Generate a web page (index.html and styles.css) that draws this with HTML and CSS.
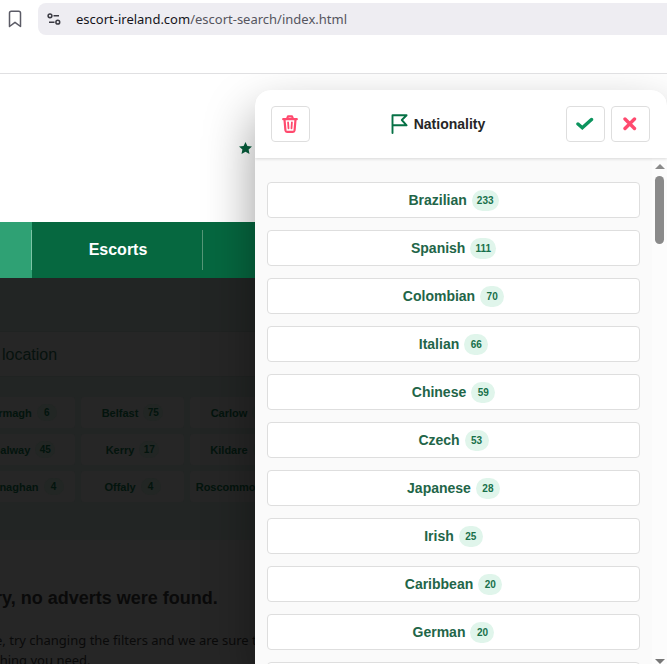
FILE: index.html
```
<!DOCTYPE html>
<html lang="en">
<head>
<meta charset="utf-8">
<title>Nationality</title>
<link rel="stylesheet" href="styles.css">
</head>
<body>
<header class="browser">
  <button class="bookmark" aria-label="Bookmark"><svg width="14" height="18" viewBox="0 0 14 18" fill="none" stroke="#5b5b66" stroke-width="1.5" stroke-linejoin="round"><path d="M1.5 3Q1.5 1.2 3.3 1.2H10.7Q12.5 1.2 12.5 3V16.5L7 12.3L1.5 16.5Z"/></svg></button>
  <div class="address">
    <svg width="14" height="14" viewBox="0 0 14 14" fill="none" stroke="#3a3a42" stroke-width="1.5"><circle cx="3" cy="3.8" r="1.9"/><path d="M6.5 3.8H12M2 10.2H7.5"/><circle cx="10.8" cy="10.2" r="1.9"/></svg>
    <span class="url"><b>escort-ireland.com</b>/escort-search/index.html</span>
  </div>
</header>
<main class="page">
  <div class="masthead"><svg width="13" height="12" viewBox="0 0 13 12" fill="#065f3d"><path d="M6.5 0L8.4 4.1L13 4.6L9.6 7.6L10.5 12L6.5 9.8L2.5 12L3.4 7.6L0 4.6L4.6 4.1Z"/></svg></div>
  <nav class="nav"><span class="current"></span><a href="#">Escorts</a></nav>
  <section class="search">
    <h2>location</h2>
    <div class="places">
      <button>Armagh <span>6</span></button><button>Belfast <span>75</span></button><button>Carlow <span>9</span></button>
      <button>Galway <span>45</span></button><button>Kerry <span>17</span></button><button>Kildare <span>9</span></button>
      <button>Monaghan <span>4</span></button><button>Offaly <span>4</span></button><button>Roscommon <span>4</span></button>
    </div>
  </section>
  <section class="empty">
    <h1>ry, no adverts were found.</h1>
    <p>e, try changing the filters and we are sure to<br>thing you need.</p>
  </section>
</main>
<aside class="dialog" role="dialog" aria-labelledby="title">
  <header class="dialog-head">
    <button class="tool" aria-label="Clear"><svg width="17" height="18" viewBox="0 0 17 18" fill="none" stroke="#ff4a6e" stroke-width="2.2" stroke-linecap="round" stroke-linejoin="round"><path d="M1.2 4.2H14.8M5 3.8L6 1.3H10L11 3.8M2.5 4.5L3.4 15.2Q3.6 16.8 5 16.8H11Q12.4 16.8 12.6 15.2L13.5 4.5"/><path stroke-width="1.8" d="M6.1 7.5L6.5 13.3M9.9 7.5L9.5 13.3"/></svg></button>
    <div class="title"><svg width="17" height="20" viewBox="0 0 17 20" fill="none" stroke="#067145" stroke-width="1.9" stroke-linejoin="round" stroke-linecap="round"><path d="M1.5 19V1.3H15.6L10.8 6L15.6 11.3H1.5"/></svg><h2 id="title">Nationality</h2></div>
    <div class="tools">
      <button class="tool" aria-label="Apply"><svg width="18" height="14" viewBox="0 0 18 14" fill="none" stroke="#0c945e" stroke-width="3.4" stroke-linecap="round"><path d="M2 7L6.3 10.8L15.5 2.5"/></svg></button>
      <button class="tool" aria-label="Close"><svg width="14" height="14" viewBox="0 0 14 14" fill="none" stroke="#ff4a6e" stroke-width="3.4" stroke-linecap="round"><path d="M2 2L11.5 11.5M11.5 2L2 11.5"/></svg></button>
    </div>
  </header>
  <div class="dialog-body">
    <div class="options">
      <button>Brazilian <span>233</span></button>
      <button>Spanish <span>111</span></button>
      <button>Colombian <span>70</span></button>
      <button>Italian <span>66</span></button>
      <button>Chinese <span>59</span></button>
      <button>Czech <span>53</span></button>
      <button>Japanese <span>28</span></button>
      <button>Irish <span>25</span></button>
      <button>Caribbean <span>20</span></button>
      <button>German <span>20</span></button>
      <button aria-label="More"></button>
    </div>
    <div class="scrollbar" aria-hidden="true">
      <i class="up"></i><i class="thumb"></i><i class="down"></i>
    </div>
  </div>
</aside>
</body>
</html>
```
FILE: styles.css
```
* { box-sizing: border-box; }
body {
  margin: 0;
  height: 100vh;
  overflow: hidden;
  display: flex;
  flex-direction: column;
  position: relative;
  background: #fff;
  font-family: "Liberation Sans", Arial, sans-serif;
}
button { font: inherit; padding: 0; margin: 0; border: 0; background: none; }
svg { display: block; flex: none; }
h1, h2, p { margin: 0; }

.browser {
  flex: none;
  height: 74px;
  display: flex;
  align-items: flex-start;
  gap: 16px;
  padding: 3px 0 0 8px;
  border-bottom: 1px solid #e0e0e2;
}
.bookmark { margin-top: 7px; }
.address {
  flex: 1;
  height: 32px;
  display: flex;
  align-items: center;
  gap: 15px;
  padding-left: 9px;
  border-radius: 8px 0 0 8px;
  background: #eeedf2;
  font: 13px/20px "Noto Sans", sans-serif;
  color: #55555e;
}
.url b { font-weight: 400; color: #15141a; }

.page { flex: 1; min-height: 0; overflow: hidden; display: flex; flex-direction: column; background: #262626; }
.masthead { flex: none; height: 148px; padding: 68px 0 0 239px; background: #fff; }
.nav { flex: none; height: 56px; display: flex; align-items: center; background: #066840; }
.current {
  width: 32px;
  height: 56px;
  background: linear-gradient(#7cc4a6, #7cc4a6) right center / 1px 40px no-repeat #2fa174;
}
.nav a {
  width: 171px;
  padding-left: 2px;
  line-height: 40px;
  text-align: center;
  border-right: 1px solid #569778;
  color: #fff;
  font-size: 16px;
  font-weight: 700;
  text-decoration: none;
}
.search { flex: none; height: 262px; padding-top: 53px; background: #222524; }
.search h2 {
  height: 46px;
  padding-left: 2px;
  line-height: 46px;
  border: solid #202322;
  border-width: 1px 0;
  background: #262626;
  color: #07120e;
  font-size: 16px;
  font-weight: 400;
}
.places {
  display: grid;
  grid-template-columns: repeat(3, 103px);
  grid-auto-rows: 31px;
  gap: 6px;
  margin: 20px 0 0 -28px;
}
.places button {
  display: flex;
  align-items: center;
  justify-content: center;
  gap: 5px;
  border-radius: 3px;
  background: #262626;
  color: #03140d;
  font-size: 11px;
  font-weight: 700;
}
.places span {
  min-width: 20px;
  line-height: 17px;
  border-radius: 9px;
  background: #222624;
  font-size: 10px;
}
.empty { margin-left: -5px; padding-top: 46px; color: #0a0a0a; }
.empty h1 { font-size: 18px; line-height: 24px; }
.empty p { margin-top: 20px; font: 13px/20px "Noto Sans", sans-serif; white-space: nowrap; }

.dialog {
  position: absolute;
  top: 90px;
  left: 255px;
  right: 0;
  bottom: 0;
  display: flex;
  flex-direction: column;
  overflow: hidden;
  border-radius: 16px 16px 0 0;
  background: #fafafa;
  box-shadow: 0 24px 50px rgba(0, 0, 0, 0.4);
  clip-path: inset(-16px 0 0 -60px);
}
.dialog-head {
  position: relative;
  z-index: 1;
  flex: none;
  height: 68px;
  display: flex;
  justify-content: space-between;
  align-items: center;
  padding: 0 17px 0 16px;
  background: #fff;
  box-shadow: 0 1px 3px rgba(0, 0, 0, 0.14);
}
.title { display: flex; align-items: center; gap: 6px; color: #262626; }
.title h2 { font-size: 14px; line-height: 20px; }
.tools { display: flex; justify-content: flex-end; gap: 6px; }
.tool {
  width: 39px;
  height: 36px;
  display: flex;
  align-items: center;
  justify-content: center;
  border: 1px solid #dedede;
  border-radius: 4px;
  background: #fff;
}
.dialog-body { flex: 1; min-height: 0; display: flex; overflow: hidden; }
.options {
  flex: 1;
  display: flex;
  flex-direction: column;
  gap: 12px;
  padding: 24px 12px 0;
}
.options button {
  flex: none;
  height: 36px;
  display: flex;
  align-items: center;
  justify-content: center;
  gap: 5px;
  border: 1px solid #dedede;
  border-radius: 4px;
  background: #fff;
  color: #226548;
  font-size: 14px;
  font-weight: 700;
}
.options span {
  min-width: 24px;
  padding: 0 5px;
  line-height: 21px;
  border-radius: 11px;
  background: #e0f5eb;
  color: #18704a;
  font-size: 10px;
}
.scrollbar {
  width: 15px;
  display: flex;
  flex-direction: column;
  align-items: center;
  padding-top: 6px;
  background: #fcfcfc;
}
.up, .down { border: solid transparent; border-width: 0 5px; }
.up { border-bottom: 5px solid #8a8a8a; }
.thumb { width: 9px; height: 68px; margin-top: 7px; border-radius: 5px; background: #8a8a8a; }
.down { margin-top: auto; border-top: 5px solid #777; }
```
